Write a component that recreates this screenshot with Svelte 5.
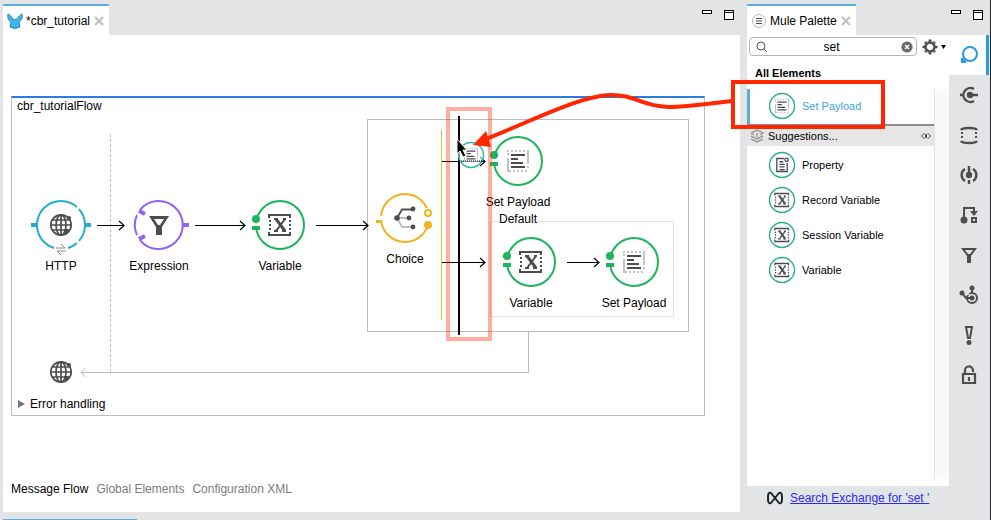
<script>
  const nodes = [
    { x: 61, y: 225, kind: 'http', glyph: 'globe', lines: ['HTTP'] },
    { x: 159, y: 225, kind: 'filter', glyph: 'funnel', lines: ['Expression'] },
    { x: 280, y: 225, kind: 'step', glyph: 'variable', lines: ['Variable'] },
    { x: 405, y: 218, kind: 'choice', glyph: 'branch', lines: ['Choice'] },
    { x: 518, y: 161, kind: 'step', glyph: 'payload', lines: ['Set Payload', 'Default'] },
    { x: 531, y: 262, kind: 'step', glyph: 'variable', lines: ['Variable'] },
    { x: 634, y: 262, kind: 'step', glyph: 'payload', lines: ['Set Payload'] },
    { x: 61, y: 372, kind: 'plain', glyph: 'globe', lines: [] }
  ];
  const origin = { x: 12, y: 98 };

  const arrows = [
    [97, 124, 225],
    [195, 245, 225],
    [316, 368, 225],
    [442, 485, 161],
    [442, 485, 262],
    [567, 599, 262]
  ];

  const suggestions = [
    { label: 'Property', glyph: 'property' },
    { label: 'Record Variable', glyph: 'variable' },
    { label: 'Session Variable', glyph: 'variable' },
    { label: 'Variable', glyph: 'variable' }
  ];

  const rail = ['search', 'connectors', 'scopes', 'components', 'transformers', 'filters', 'flow control', 'error handling', 'security'];

  let active = $state('search');
  let view = $state('Message Flow');
  let query = $state('set');
</script>

{#snippet glyph(name)}
  {#if name === 'globe'}
    <g fill="none" stroke="#4d4d4f" stroke-width="1.7">
      <circle r="10.2" />
      <ellipse rx="5" ry="10.2" />
      <path d="M0-10V10M-10 0H10M-9-5H9M-9 5H9" />
    </g>
    <circle cx="8" cy="-7" r="2" fill="#4d4d4f" />
    <circle cx="5" cy="6" r="2.2" fill="#4d4d4f" />
  {:else if name === 'funnel'}
    <path fill="#4d4d4f" fill-rule="evenodd" d="M-10-9H10L3 2V10H-3V2ZM-5-6L-1 0H1L5-6Z" />
  {:else if name === 'variable'}
    <path fill="none" stroke="#4d4d4f" stroke-width="2" d="M-11-7V-10H10V-7M-11 7V10H10V7" />
    <path fill="none" stroke="#4d4d4f" stroke-width="2" stroke-dasharray="2 2" d="M-10-5V6M10-5V6" />
    <path fill="none" stroke="#4d4d4f" stroke-width="3" d="M-4-6L5 6" />
    <path fill="none" stroke="#4d4d4f" stroke-width="2" d="M5-6L-4 6M-6-6H-2M3-6H6M-6 6H-2M2 6H6" />
  {:else if name === 'payload'}
    <path fill="none" stroke="#c2c2c3" stroke-width="2" stroke-dasharray="2 2" d="M-11-10H8M-9 10H11M-10-8V-4M10 5V9" />
    <path fill="none" stroke="#c2c2c3" stroke-width="2" d="M-10-3V11M10-11V3" />
    <path fill="none" stroke="#4d4d4f" stroke-width="2" d="M-7-6H7M-7-2H0M-7 2H5M-7 6H7" />
  {:else if name === 'branch'}
    <path fill="none" stroke="#4d4d4f" stroke-width="1.8" d="M-8 0L-3-8.500H8" />
    <path fill="none" stroke="#bdbdbe" stroke-width="1.8" d="M-8 0H4M-8 0L-3 9H8" />
    <g fill="#4d4d4f">
      <circle cx="-8" r="2.8" /><circle cx="8" cy="-9" r="2.4" /><circle cx="4" r="2.4" /><circle cx="8" cy="9" r="2.4" />
    </g>
  {:else if name === 'property'}
    <g fill="none" stroke="#4d4d4f" stroke-width="2">
      <path d="M3-10H-8V10H8V-3M-4-5H2M-4-1H4M-4 3H4M-4 7H4" />
      <circle cx="7" cy="-8" r="2.6" />
    </g>
  {/if}
{/snippet}

{#snippet ring(kind)}
  {#if kind === 'http'}
    <circle r="24" fill="none" stroke="#23aecb" stroke-width="2" />
    <path stroke="#fff" stroke-width="3" d="M15-15L20-20M15 15L20 20" />
    <rect x="-7" y="19" width="14" height="8" fill="#fff" />
    <path fill="#23aecb" d="M-30-2h6v4h-6zM24-2h6v4h-6z" />
    <path fill="none" stroke="#8a8a8a" stroke-width="1" d="M-5 23H4L0 19M5 26H-4L0 30" />
  {:else if kind === 'filter'}
    <g fill="none" stroke="#9060f8" stroke-width="2">
      <path d="M-19-15A24 24 0 1 1-19 15" />
      <path d="M-22-10A24 24 0 0 0-22 10" />
      <path stroke-width="4" d="M-20-14L-14-11M-20 14L-14 11" />
    </g>
    <path fill="#9060f8" d="M24-2h6v4h-6z" />
  {:else if kind === 'step'}
    <circle r="24" fill="none" stroke="#1db45c" stroke-width="2" />
    <path fill="#fff" d="M-28-3h8v4h-8z" />
    <circle cx="-24" cy="-6" r="4" fill="#1db45c" />
    <path fill="#1db45c" d="M-28 1h8v4h-8z" />
  {:else if kind === 'choice'}
    <circle r="24" fill="none" stroke="#f2b41c" stroke-width="2" />
    <path fill="#fff" d="M-27-2h6v4h-6zM21-10h6v20h-6z" />
    <path fill="#f2b41c" d="M-29 2h6v3h-6z" />
    <circle cx="23" cy="-5" r="3" fill="#fff" stroke="#f2b41c" stroke-width="2" />
    <circle cx="23" cy="7" r="4" fill="#f2b41c" />
  {/if}
{/snippet}

{#snippet badge(name)}
  <svg class="badge" viewBox="-14 -14 28 28" aria-hidden="true">
    <circle r="12.5" fill="#fff" stroke="#27ad92" stroke-width="1.4" />
    <g transform="scale(.65)">{@render glyph(name)}</g>
  </svg>
{/snippet}

{#snippet windowButtons()}
  <div class="winbtns">
    <button aria-label="Minimize"><svg width="10" height="10" shape-rendering="crispEdges"><path d="M0 0h10v4H0z" /><path fill="#fff" d="M1 1h8v2H1z" /></svg></button>
    <button aria-label="Maximize"><svg width="10" height="10" shape-rendering="crispEdges"><path d="M0 0h10v10H0z" /><path fill="#fff" d="M1 1h8v1H1zM1 3h8v6H1z" /></svg></button>
  </div>
{/snippet}

{#snippet closeMark()}
  <button class="close" aria-label="Close tab"><svg width="10" height="10" viewBox="0 0 10 10"><path d="M1 1L9 9M9 1L1 9" stroke="#c3c3c4" stroke-width="2.4" /></svg></button>
{/snippet}

<div class="ide">
  <main class="editor">
    <header class="tabs">
      <div class="tab">
        <svg width="16" height="16" viewBox="0 0 16 16" aria-hidden="true">
          <path d="M1 1C3 2 5 4 6 6Q8 7 10 6C11 4 13 2 15 1C16 5 14 8 12 9L13 14Q8 17 3 14L4 9C2 8 0 5 1 1Z" fill="#3cb6ee" stroke="#3a86ad" stroke-width="1" />
        </svg>
        <span>*cbr_tutorial</span>
        {@render closeMark()}
      </div>
      {@render windowButtons()}
    </header>

    <div class="sheet">
      <section class="flow">
        <h2>cbr_tutorialFlow</h2>
        <svg class="wires" viewBox="12 98 693 317" width="693" height="317" aria-hidden="true">
          <g fill="none" shape-rendering="crispEdges">
            <path stroke="#bdbdbe" d="M367.500 119.500H688.500V331.500H367.500Z" />
            <path stroke="#e0e0e0" d="M490.500 221.500H673.500V316.500H490.500Z" />
            <path stroke="#bdbdbe" stroke-dasharray="3 2" d="M110.500 134V372" />
            <path stroke="#bdbdbe" d="M528.500 332V372.500H81" />
          </g>
          <path fill="#f2b41c" d="M441 130h1v190h-1z" />
          <path fill="none" stroke="#bdbdbe" d="M85.500 368L81 372.500L85.500 377" />
          {#each arrows as [x1, x2, y]}
            <path fill="none" stroke="#000" stroke-width="1.2" d="M{x1} {y + 0.5}H{x2}M{x2 - 5} {y - 4}L{x2} {y + 0.5}L{x2 - 5} {y + 5}" />
          {/each}
        </svg>
        {#each nodes as n}
          <div class="node" style:left="{n.x - origin.x}px" style:top="{n.y - origin.y}px">
            <svg width="62" height="64" viewBox="-31 -32 62 64" aria-hidden="true">
              {@render ring(n.kind)}
              {@render glyph(n.glyph)}
            </svg>
            {#each n.lines as line}<span>{line}</span>{/each}
          </div>
        {/each}
        <button class="errors"><i></i>Error handling</button>
      </section>

      <nav class="views">
        {#each ['Message Flow', 'Global Elements', 'Configuration XML'] as v}
          <button class:on={view === v} onclick={() => (view = v)}>{v}</button>
        {/each}
      </nav>
    </div>
    <div class="nextview"></div>
  </main>

  <aside class="palette">
    <header class="tabs">
      <div class="tab">
        <svg width="16" height="16" viewBox="0 0 16 16" aria-hidden="true">
          <circle cx="8" cy="8" r="6.500" fill="#fff" stroke="#b5b5b6" />
          <path d="M5 5.500H11M5 8H11M5 10.500H11" stroke="#4d4d4f" />
        </svg>
        <span>Mule Palette</span>
        {@render closeMark()}
      </div>
      {@render windowButtons()}
    </header>

    <div class="body">
      <div class="column">
        <div class="list">
          <div class="searchrow">
            <label class="field">
              <svg width="12" height="12" viewBox="0 0 12 12" aria-hidden="true"><circle cx="5" cy="5" r="4" fill="none" stroke="#555" /><path d="M8 8L11 11" stroke="#555" /></svg>
              <input type="text" aria-label="Search palette" bind:value={query} />
              <button aria-label="Clear search" onclick={() => (query = '')}>
                <svg width="12" height="12" viewBox="0 0 12 12"><circle cx="6" cy="6" r="5.600" fill="#6b6b6c" /><path d="M4 4L8 8M8 4L4 8" stroke="#fff" stroke-width="1.300" /></svg>
              </button>
            </label>
            <button class="gear" aria-label="Palette settings">
              <svg width="24" height="16" viewBox="-8 -8 24 16">
                <circle r="4.500" fill="none" stroke="#4d4d4f" stroke-width="2.400" />
                <g stroke="#4d4d4f" stroke-width="2.600"><path d="M0-7.500V-5M0 7.500V5M-7.500 0H-5M7.500 0H5M-5-5L-4-4M5 5L4 4M-5 5L-4 4M5-5L4-4" /></g>
                <path d="M11-2H16L13.500 2Z" />
              </svg>
            </button>
          </div>
          <h3>All Elements</h3>
          <div class="scroll">
            <div class="items">
              <button class="item picked">{@render badge('payload')}Set Payload</button>
              <div class="bar">
                <svg width="14" height="14" viewBox="0 0 14 14" fill="none" stroke="#9b9b9c" stroke-width="1.500" aria-hidden="true"><path d="M1 4L7 1L13 4L10 6M4 6L1 4M1 7L7 10L13 7M1 10L7 13L13 10M7 4V8" /></svg>
                <span>Suggestions...</span>
                <svg width="10" height="8" viewBox="0 0 10 8" fill="none" stroke="#555" stroke-width="1" aria-hidden="true"><path d="M3.500 1L.5 4L3.500 7M6.500 1L9.500 4L6.500 7M4 2L6 4L4 6M6 2L4 4L6 6" /></svg>
              </div>
              {#each suggestions as s}
                <button class="item">{@render badge(s.glyph)}{s.label}</button>
              {/each}
            </div>
            <div class="track"></div>
          </div>
        </div>
        <footer>
          <svg width="16" height="14" viewBox="0 0 16 14" fill="none" stroke="#1d252b" stroke-width="2" aria-hidden="true"><path d="M4 12C1 13 1 10 1 7S1 1 4 2L12 12C15 13 15 10 15 7S15 1 12 2L4 12" /></svg>
          <a href="#exchange">Search Exchange for 'set '</a>
        </footer>
      </div>

      <nav class="rail">
        {#each rail as r}
          <button class:on={active === r} aria-label={r} onclick={() => (active = r)}>
            <svg width="20" height="20" viewBox="-10 -10 20 20" fill="none" stroke="currentColor" stroke-width="2">
              {#if r === 'search'}
                <circle cx="1" cy="-1" r="7" /><path stroke-width="2.200" d="M-4 4L-7 7M-7 3V7H-3" />
              {:else if r === 'connectors'}
                <path stroke-width="2.400" d="M5-6A7 7 0 1 0 5 6M-9 0H-6M2 0H9" /><circle cx="1" r="3.200" fill="currentColor" stroke="none" />
              {:else if r === 'scopes'}
                <path stroke-width="2.400" d="M-8-5Q-7-7 0-7T8-5M-8 6Q-7 8 0 8T8 6" /><path stroke-dasharray="2 2" d="M-7-3V5M7-3V5" />
              {:else if r === 'components'}
                <path stroke-width="2.400" d="M-4-6A7 7 0 0 0-4 6M4-6A7 7 0 0 1 4 6M0-9V-2M0 5V9" /><circle r="3.200" fill="currentColor" stroke="none" />
              {:else if r === 'transformers'}
                <path d="M-5 4V-7H5V-4M3 3H7V7H3Z" /><circle cx="-5" cy="5" r="3.500" fill="currentColor" stroke="none" /><path fill="currentColor" stroke="none" d="M1-4H9L5 1Z" />
              {:else if r === 'filters'}
                <path fill="currentColor" stroke="none" fill-rule="evenodd" d="M-8-7H8L2 1V8H-2V1ZM-4-5L-1-1H1L4-5Z" />
              {:else if r === 'flow control'}
                <circle cx="3" cy="3" r="5" /><path d="M-7-2L-3 3H3M3-6V-3" /><path stroke="#e3e4e6" stroke-width="3" d="M-3-1L0-2" /><g fill="currentColor" stroke="none"><circle cx="-7" cy="-2" r="2.500" /><circle cx="3" cy="-7" r="2.500" /><circle cx="3" cy="3" r="2.500" /></g>
              {:else if r === 'error handling'}
                <path d="M-3-8H3L1 3H-1Z" /><circle cy="7.500" r="2.500" fill="currentColor" stroke="none" />
              {:else}
                <path stroke-width="2.200" d="M-6-1H6V8H-6ZM-4-1V-4A4 4 0 0 1 4-5V-3M0 2V6" />
              {/if}
            </svg>
          </button>
        {/each}
      </nav>
    </div>
  </aside>

  <svg class="callout" width="900" height="350" aria-hidden="true">
    <path stroke="#000" stroke-width="2" d="M459 116V335" />
    <g transform="translate(471 155)">
      <circle r="12.500" fill="#fff" fill-opacity=".6" stroke="#27b8a0" stroke-width="1.400" />
      <g transform="scale(.65)">{@render glyph('payload')}</g>
      <path stroke="#000" stroke-dasharray="1 1" d="M-12 6H12" />
    </g>
    <rect x="448" y="109" width="42" height="230" fill="none" stroke="#ff2600" stroke-opacity=".37" stroke-width="4" />
    <rect x="733" y="82" width="150" height="45" fill="none" stroke="#ff2600" stroke-width="4" />
    <path fill="none" stroke="#ff2600" stroke-width="4" d="M732 101C708 104 688 107 668 107C640 106 637 95 611 95C583 95 536 119 486 139" />
    <path fill="#ff2600" d="M473 145L486 131L491 147Z" />
    <path stroke="#fff" d="M457 139V154L460 151L463 157L466 156L463 150H467Z" />
  </svg>
</div>

<style>
  :global(body) {
    margin: 0;
    background: #e3e4e6;
  }
  .ide {
    position: relative;
    display: flex;
    gap: 7px;
    min-height: 100vh;
    box-sizing: border-box;
    padding-left: 3px;
    border-right: 1px solid #20222a;
    font: 12px/16px 'Liberation Sans', Arial, sans-serif;
    color: #000;
  }
  button {
    font: inherit;
    color: inherit;
    border: 0;
    padding: 0;
    background: none;
    display: flex;
    align-items: center;
  }
  svg {
    flex: none;
  }
  .editor {
    flex: 1;
    min-width: 0;
    display: flex;
    flex-direction: column;
  }
  .tabs {
    display: flex;
    justify-content: space-between;
    align-items: flex-start;
    padding-top: 4px;
  }
  .tab {
    display: flex;
    align-items: center;
    gap: 3px;
    box-sizing: border-box;
    height: 31px;
    padding: 0 5px 0 4px;
    border-top: 2px solid #5aaedb;
    background: #fff;
  }
  .close {
    margin-left: 1px;
  }
  .winbtns {
    display: flex;
    gap: 12px;
    padding: 6px 6px 0 0;
  }
  .palette .winbtns {
    padding-right: 7px;
  }
  .sheet {
    flex: 1;
    display: flex;
    flex-direction: column;
    background: #fff;
    padding: 61px 35px 15px 8px;
  }
  .flow {
    position: relative;
    height: 317px;
    border: 1px solid #bdbdbe;
    border-top: 2px solid #2b7de1;
  }
  h2 {
    margin: 0;
    padding-left: 5px;
    font: inherit;
  }
  .wires {
    position: absolute;
    left: 0;
    top: 0;
  }
  .node {
    position: absolute;
    width: 90px;
    margin: -32px 0 0 -45px;
    display: flex;
    flex-direction: column;
    align-items: center;
    line-height: 17px;
  }
  .node svg {
    margin-bottom: 1px;
  }
  .node span {
    background: #fff;
  }
  .errors {
    position: absolute;
    left: 6px;
    bottom: 3px;
    gap: 5px;
  }
  .errors i {
    border-left: 7px solid #777;
    border-top: 4px solid transparent;
    border-bottom: 4px solid transparent;
  }
  .views {
    display: flex;
    gap: 8px;
    margin-top: auto;
    color: #7b7b7c;
  }
  .views .on {
    color: #000;
  }
  .nextview {
    width: 134px;
    margin-top: 7px;
    height: 1px;
    background: #5aaedb;
  }
  .palette {
    width: 243px;
    flex: none;
    display: flex;
    flex-direction: column;
  }
  .body {
    flex: 1;
    display: flex;
  }
  .column {
    flex: 1;
    display: flex;
    flex-direction: column;
  }
  .list {
    flex: 1;
    display: flex;
    flex-direction: column;
    background: #fff;
    padding-bottom: 7px;
  }
  .searchrow {
    display: flex;
    align-items: center;
    justify-content: space-between;
    padding: 2px 3px 0 2px;
  }
  .field {
    display: flex;
    align-items: center;
    box-sizing: border-box;
    width: 168px;
    height: 19px;
    padding: 0 3px 0 6px;
    border: 1px solid #b5b5b6;
    border-radius: 4px;
  }
  input {
    flex: 1;
    min-width: 0;
    border: 0;
    padding: 0 6px 0 0;
    outline: 0;
    background: none;
    font: inherit;
    text-align: center;
  }
  h3 {
    margin: 9px 0 8px 8px;
    font: bold 11px/16px 'Liberation Sans', Arial, sans-serif;
  }
  .scroll {
    flex: 1;
    display: flex;
    font-size: 11px;
  }
  .items {
    flex: 1;
  }
  .track {
    width: 14px;
    border-left: 1px solid #e4e4e5;
    background: #f9f9f9;
  }
  .item {
    box-sizing: border-box;
    width: 100%;
    height: 35px;
    gap: 6px;
    padding-left: 21px;
  }
  .badge {
    width: 28px;
    height: 28px;
  }
  .picked {
    padding: 0 0 2px 18px;
    border-left: 3px solid #5aaedb;
    color: #42a5d8;
  }
  .bar {
    display: flex;
    align-items: center;
    gap: 4px;
    height: 20px;
    margin-bottom: 1px;
    padding: 0 3px;
    border-top: 2px solid #8c8c8d;
    background: #e6e6e7;
  }
  .bar span {
    flex: 1;
  }
  footer {
    display: flex;
    align-items: center;
    gap: 7px;
    height: 24px;
    padding: 0 0 10px 20px;
  }
  a {
    color: #2a2af0;
    white-space: nowrap;
  }
  .rail {
    width: 41px;
    display: flex;
    flex-direction: column;
    color: #4d4d4f;
  }
  .rail button {
    box-sizing: border-box;
    width: 40px;
    height: 40px;
    justify-content: center;
  }
  .rail .on {
    padding-left: 3px;
    border-right: 3px solid #2a9bdc;
    background: #fff;
    color: #2a9bdc;
  }
  .callout {
    position: absolute;
    left: 0;
    top: 0;
    pointer-events: none;
  }
</style>
